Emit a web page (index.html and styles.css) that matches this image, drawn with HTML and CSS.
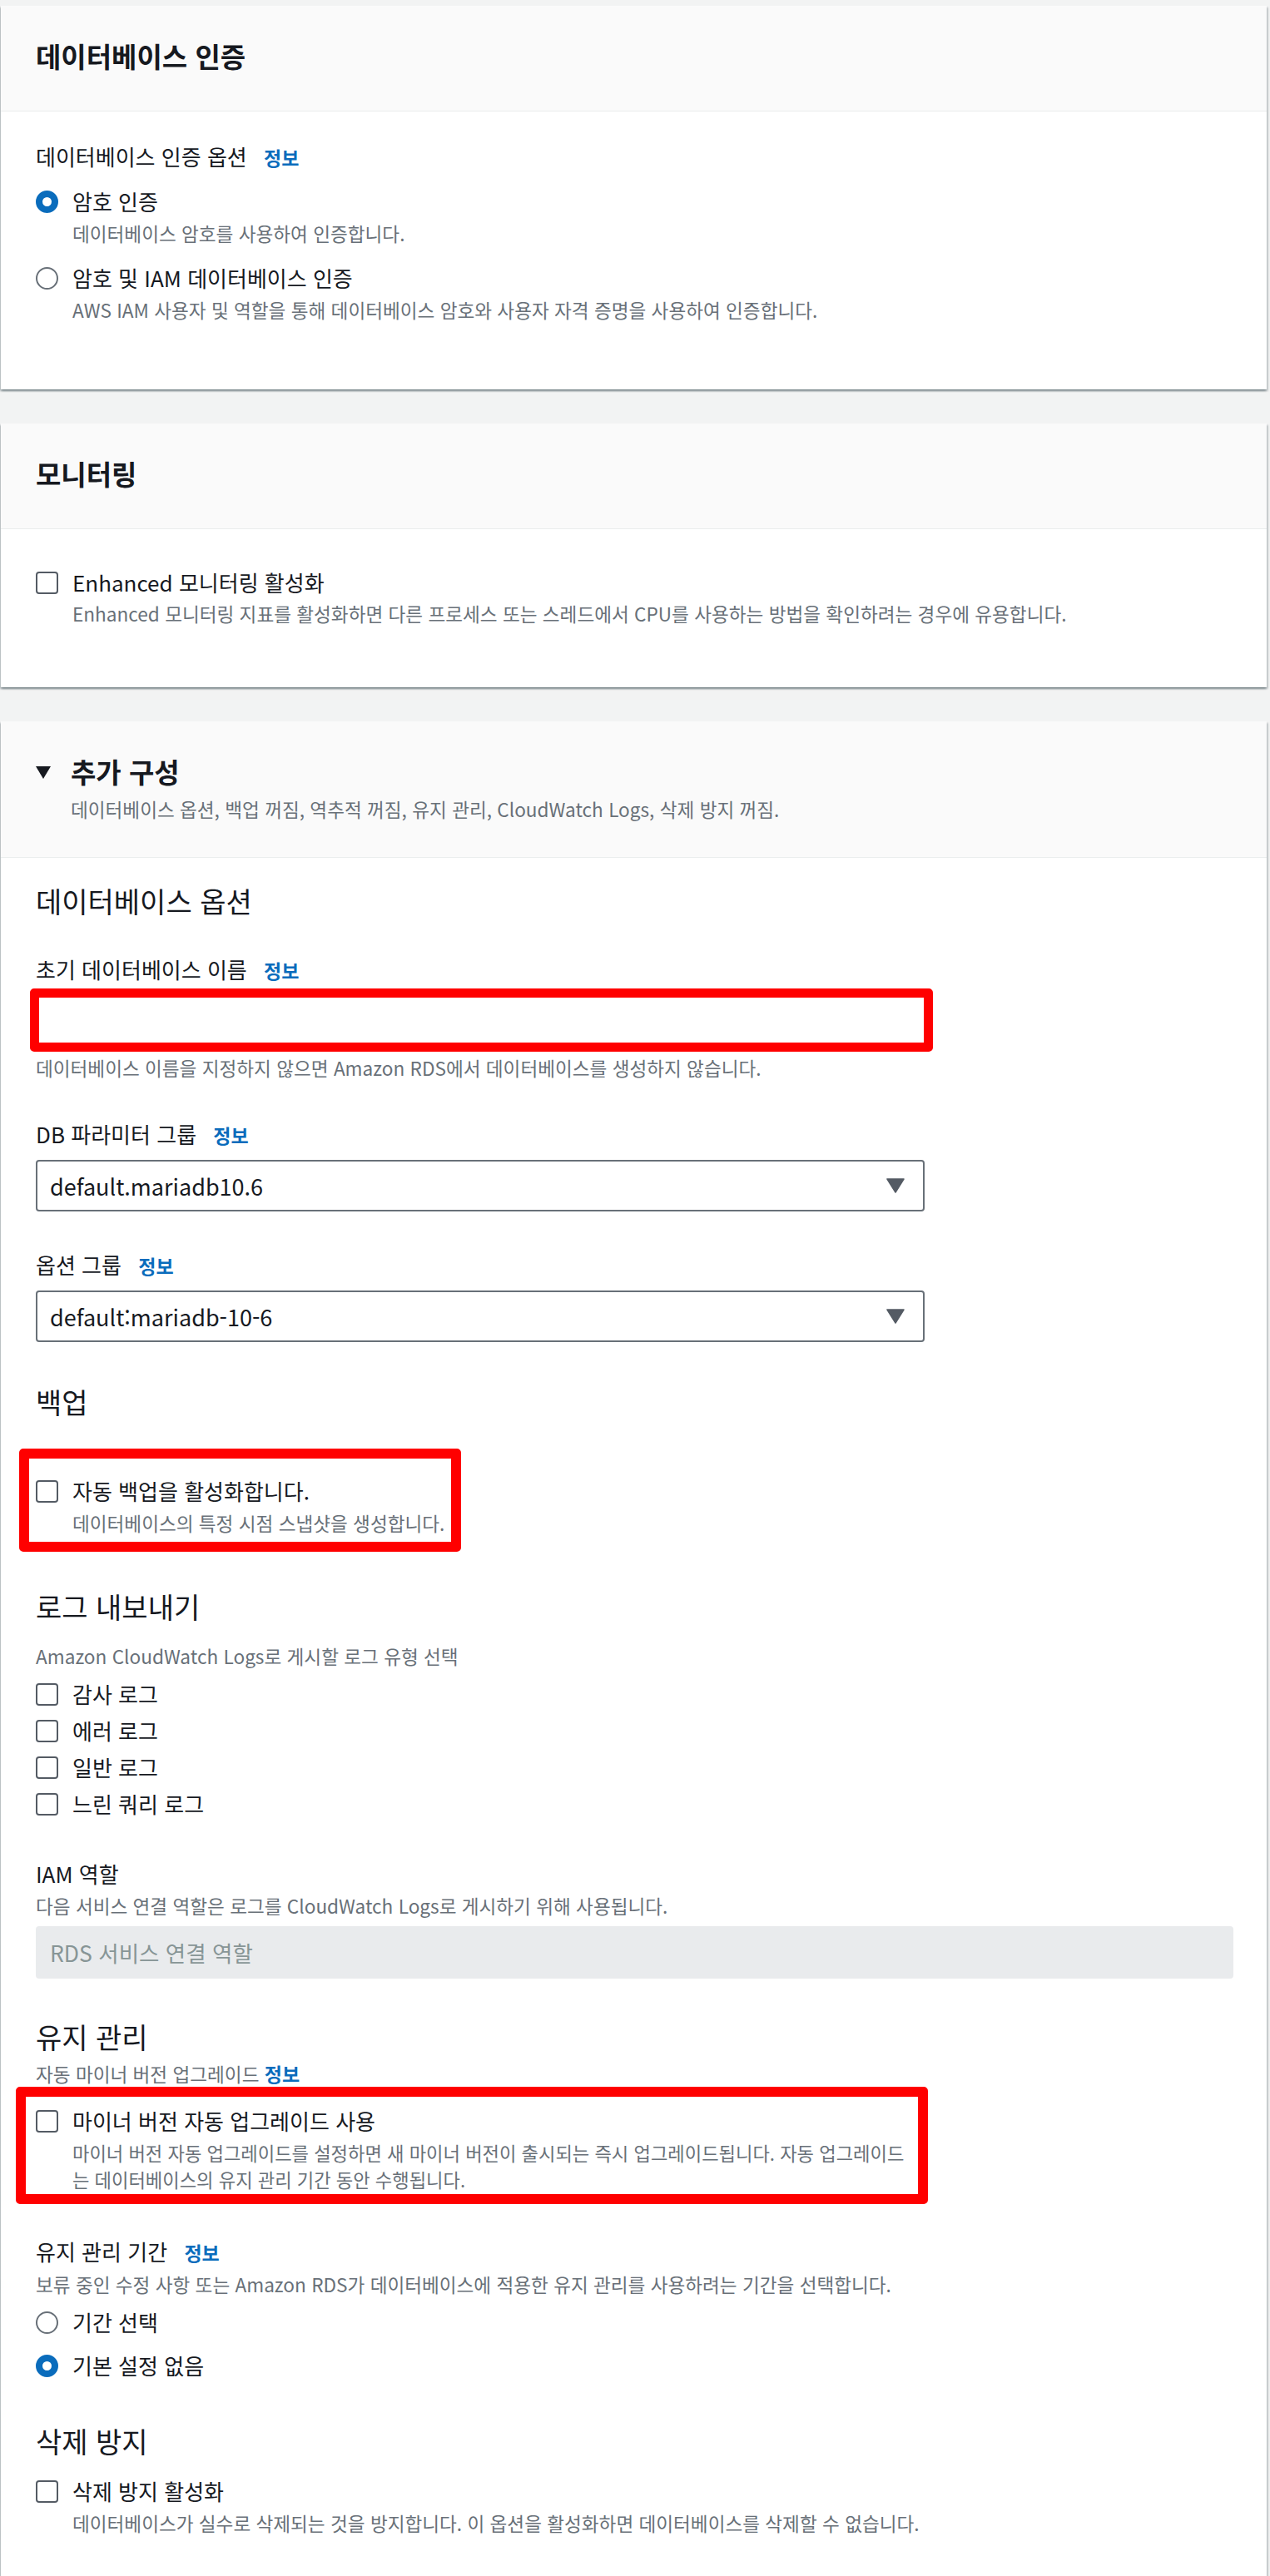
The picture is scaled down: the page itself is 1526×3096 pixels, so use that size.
FILE: index.html
```html
<!DOCTYPE html>
<html lang="ko">
<head>
<meta charset="utf-8">
<title>RDS 데이터베이스 생성</title>
<link rel="stylesheet" href="styles.css">
</head>
<body>
<div class="page">

  <section class="card">
    <header class="card-head">
      <h2 class="card-title">데이터베이스 인증</h2>
    </header>
    <div class="card-body auth-body">
      <div class="label">데이터베이스 인증 옵션 <a class="info">정보</a></div>
      <div class="choice first-choice"><span class="radio on"></span><span>암호 인증</span></div>
      <div class="desc choice-desc">데이터베이스 암호를 사용하여 인증합니다.</div>
      <div class="choice next-choice"><span class="radio"></span><span>암호 및 IAM 데이터베이스 인증</span></div>
      <div class="desc choice-desc">AWS IAM 사용자 및 역할을 통해 데이터베이스 암호와 사용자 자격 증명을 사용하여 인증합니다.</div>
    </div>
  </section>

  <section class="card">
    <header class="card-head">
      <h2 class="card-title">모니터링</h2>
    </header>
    <div class="card-body monitor-body">
      <div class="choice"><span class="checkbox"></span><span>Enhanced 모니터링 활성화</span></div>
      <div class="desc choice-desc">Enhanced 모니터링 지표를 활성화하면 다른 프로세스 또는 스레드에서 CPU를 사용하는 방법을 확인하려는 경우에 유용합니다.</div>
    </div>
  </section>

  <section class="card">
    <header class="card-head expand-head">
      <div class="expand-title">
        <svg class="caret" width="18" height="16" viewBox="0 0 18 16"><polygon points="0,1 18,1 9,16" fill="#16191f"/></svg>
        <h2 class="card-title">추가 구성</h2>
      </div>
      <div class="desc head-desc">데이터베이스 옵션, 백업 꺼짐, 역추적 꺼짐, 유지 관리, CloudWatch Logs, 삭제 방지 꺼짐.</div>
    </header>
    <div class="card-body extra-body">
      <h3 class="sub">데이터베이스 옵션</h3>

      <div class="field gap-a">
        <div class="label">초기 데이터베이스 이름 <a class="info">정보</a></div>
        <div class="mark-input"></div>
        <div class="desc input-desc">데이터베이스 이름을 지정하지 않으면 Amazon RDS에서 데이터베이스를 생성하지 않습니다.</div>
      </div>

      <div class="field gap-b">
        <div class="label">DB 파라미터 그룹 <a class="info">정보</a></div>
        <div class="select"><span>default.mariadb10.6</span><svg width="22" height="18" viewBox="0 0 22 18"><polygon points="1,1 21,1 11,17" fill="#545b64" stroke="#545b64" stroke-width="1.5" stroke-linejoin="round"/></svg></div>
      </div>

      <div class="field gap-c">
        <div class="label">옵션 그룹 <a class="info">정보</a></div>
        <div class="select"><span>default:mariadb-10-6</span><svg width="22" height="18" viewBox="0 0 22 18"><polygon points="1,1 21,1 11,17" fill="#545b64" stroke="#545b64" stroke-width="1.5" stroke-linejoin="round"/></svg></div>
      </div>

      <h3 class="sub gap-d">백업</h3>
      <div class="mark-box backup-mark">
        <div class="choice"><span class="checkbox"></span><span>자동 백업을 활성화합니다.</span></div>
        <div class="desc choice-desc">데이터베이스의 특정 시점 스냅샷을 생성합니다.</div>
      </div>

      <h3 class="sub gap-e">로그 내보내기</h3>
      <div class="desc log-desc">Amazon CloudWatch Logs로 게시할 로그 유형 선택</div>
      <div class="check-list">
        <div class="choice"><span class="checkbox"></span><span>감사 로그</span></div>
        <div class="choice"><span class="checkbox"></span><span>에러 로그</span></div>
        <div class="choice"><span class="checkbox"></span><span>일반 로그</span></div>
        <div class="choice"><span class="checkbox"></span><span>느린 쿼리 로그</span></div>
      </div>

      <div class="field gap-f">
        <div class="label">IAM 역할</div>
        <div class="desc field-desc">다음 서비스 연결 역할은 로그를 CloudWatch Logs로 게시하기 위해 사용됩니다.</div>
        <div class="disabled-input">RDS 서비스 연결 역할</div>
      </div>

      <h3 class="sub gap-g">유지 관리</h3>
      <div class="desc upgrade-desc">자동 마이너 버전 업그레이드 <a class="info">정보</a></div>
      <div class="mark-box upgrade-mark">
        <div class="choice"><span class="checkbox"></span><span>마이너 버전 자동 업그레이드 사용</span></div>
        <div class="desc choice-desc wrap-desc">마이너 버전 자동 업그레이드를 설정하면 새 마이너 버전이 출시되는 즉시 업그레이드됩니다. 자동 업그레이드<br>는 데이터베이스의 유지 관리 기간 동안 수행됩니다.</div>
      </div>

      <div class="field gap-h">
        <div class="label">유지 관리 기간 <a class="info">정보</a></div>
        <div class="desc field-desc">보류 중인 수정 사항 또는 Amazon RDS가 데이터베이스에 적용한 유지 관리를 사용하려는 기간을 선택합니다.</div>
        <div class="radio-list">
          <div class="choice"><span class="radio"></span><span>기간 선택</span></div>
          <div class="choice"><span class="radio on"></span><span>기본 설정 없음</span></div>
        </div>
      </div>

      <h3 class="sub gap-i">삭제 방지</h3>
      <div class="choice del-choice"><span class="checkbox"></span><span>삭제 방지 활성화</span></div>
      <div class="desc choice-desc">데이터베이스가 실수로 삭제되는 것을 방지합니다. 이 옵션을 활성화하면 데이터베이스를 삭제할 수 없습니다.</div>
    </div>
  </section>

</div>
</body>
</html>
```

FILE: styles.css
```css
* { box-sizing: border-box; }

html, body {
  margin: 0;
  background: #f2f3f3;
}

body {
  font-family: "Noto Sans CJK KR", "Noto Sans", sans-serif;
  font-feature-settings: "palt";
  color: #16191f;
}

.page {
  display: flex;
  flex-direction: column;
  gap: 41px;
  padding: 7px 4px 4px 1px;
}

.card {
  background: #fff;
  box-shadow: 0 2px 2px 0 rgba(0, 28, 36, 0.3),
              2px 2px 2px 0 rgba(0, 28, 36, 0.15),
              -2px 2px 2px 0 rgba(0, 28, 36, 0.15);
}

.card-head {
  background: #fafafa;
  border-bottom: 1px solid #eaeded;
  padding: 40px 42px 46px;
}

.card-title {
  margin: 0;
  font-size: 33px;
  line-height: 40px;
  font-weight: 700;
}

.expand-head { padding-bottom: 41px; }

.expand-title {
  display: flex;
  align-items: center;
  gap: 24px;
}

.caret { flex: none; margin-top: 2px; }

.head-desc {
  margin: 10px 0 0 42px;
}

.card-body { padding: 0 42px; }

.auth-body { padding-top: 38px; padding-bottom: 79px; }
.monitor-body { padding-top: 48px; padding-bottom: 72px; }
.extra-body { padding-top: 32px; padding-bottom: 49px; }

.label {
  font-size: 26px;
  line-height: 32px;
}

.info {
  color: #0a6cbc;
  font-weight: 700;
  font-size: 23px;
  margin-left: 13px;
}

.upgrade-desc .info { margin-left: 0; }

.desc {
  font-size: 22.6px;
  line-height: 32px;
  color: #687078;
}

.choice {
  display: flex;
  align-items: center;
  gap: 17px;
  font-size: 26px;
  line-height: 32px;
}

.choice-desc {
  padding-left: 44px;
  margin-top: 7px;
}

.first-choice { margin-top: 21px; }
.next-choice { margin-top: 21px; }
.monitor-body .choice-desc { margin-top: 6px; }

.radio {
  flex: none;
  width: 27px;
  height: 27px;
  border-radius: 50%;
  border: 2px solid #687078;
  background: #fff;
}

.radio.on {
  border: 8px solid #0a6cbc;
}

.checkbox {
  flex: none;
  width: 27px;
  height: 27px;
  border: 2px solid #545b64;
  border-radius: 4px;
  background: #fff;
}

.sub {
  margin: 0;
  font-size: 34px;
  line-height: 40px;
  font-weight: 400;
}

.gap-a { margin-top: 46px; }
.gap-b { margin-top: 47px; }
.gap-c { margin-top: 48px; }
.gap-d { margin-top: 52px; }
.gap-e { margin-top: 46px; }
.gap-f { margin-top: 52px; }
.gap-g { margin-top: 50px; }
.gap-h { margin-top: 41px; }
.gap-i { margin-top: 55px; }

.mark-input {
  margin: 6px 0 0 -7px;
  width: 1085px;
  height: 76px;
  border: 11px solid #ff0000;
  border-radius: 5px;
  background: #fff;
}

.input-desc { margin-top: 4px; }

.select {
  margin-top: 14px;
  width: 1068px;
  height: 62px;
  border: 2px solid #687078;
  border-radius: 4px;
  display: flex;
  align-items: center;
  justify-content: space-between;
  padding: 0 22px 0 15px;
  font-size: 27px;
}

.mark-box {
  border: 12px solid #ff0000;
  border-radius: 5px;
  background: #fff;
}

.backup-mark {
  margin: 36px 0 0 -20px;
  width: fit-content;
  padding: 23px 8px 6px 8px;
}

.log-desc { margin-top: 24px; }

.check-list {
  margin-top: 13px;
  display: flex;
  flex-direction: column;
  gap: 12px;
}

.field-desc { margin-top: 7px; }

.disabled-input {
  margin-top: 8px;
  width: 1439px;
  height: 63px;
  background: #e9ebed;
  border-radius: 4px;
  color: #879596;
  font-size: 26.5px;
  padding-left: 17px;
  display: flex;
  align-items: center;
}

.upgrade-desc {
  margin-top: 9px;
  line-height: 30px;
}

.upgrade-mark {
  margin-left: -24px;
  width: 1096px;
  padding: 13px 0 2px 12px;
}

.wrap-desc {
  margin-top: 6px;
  font-size: 22.2px;
}

.radio-list {
  margin-top: 13px;
  display: flex;
  flex-direction: column;
  gap: 20px;
}

.del-choice { margin-top: 24px; }
```
